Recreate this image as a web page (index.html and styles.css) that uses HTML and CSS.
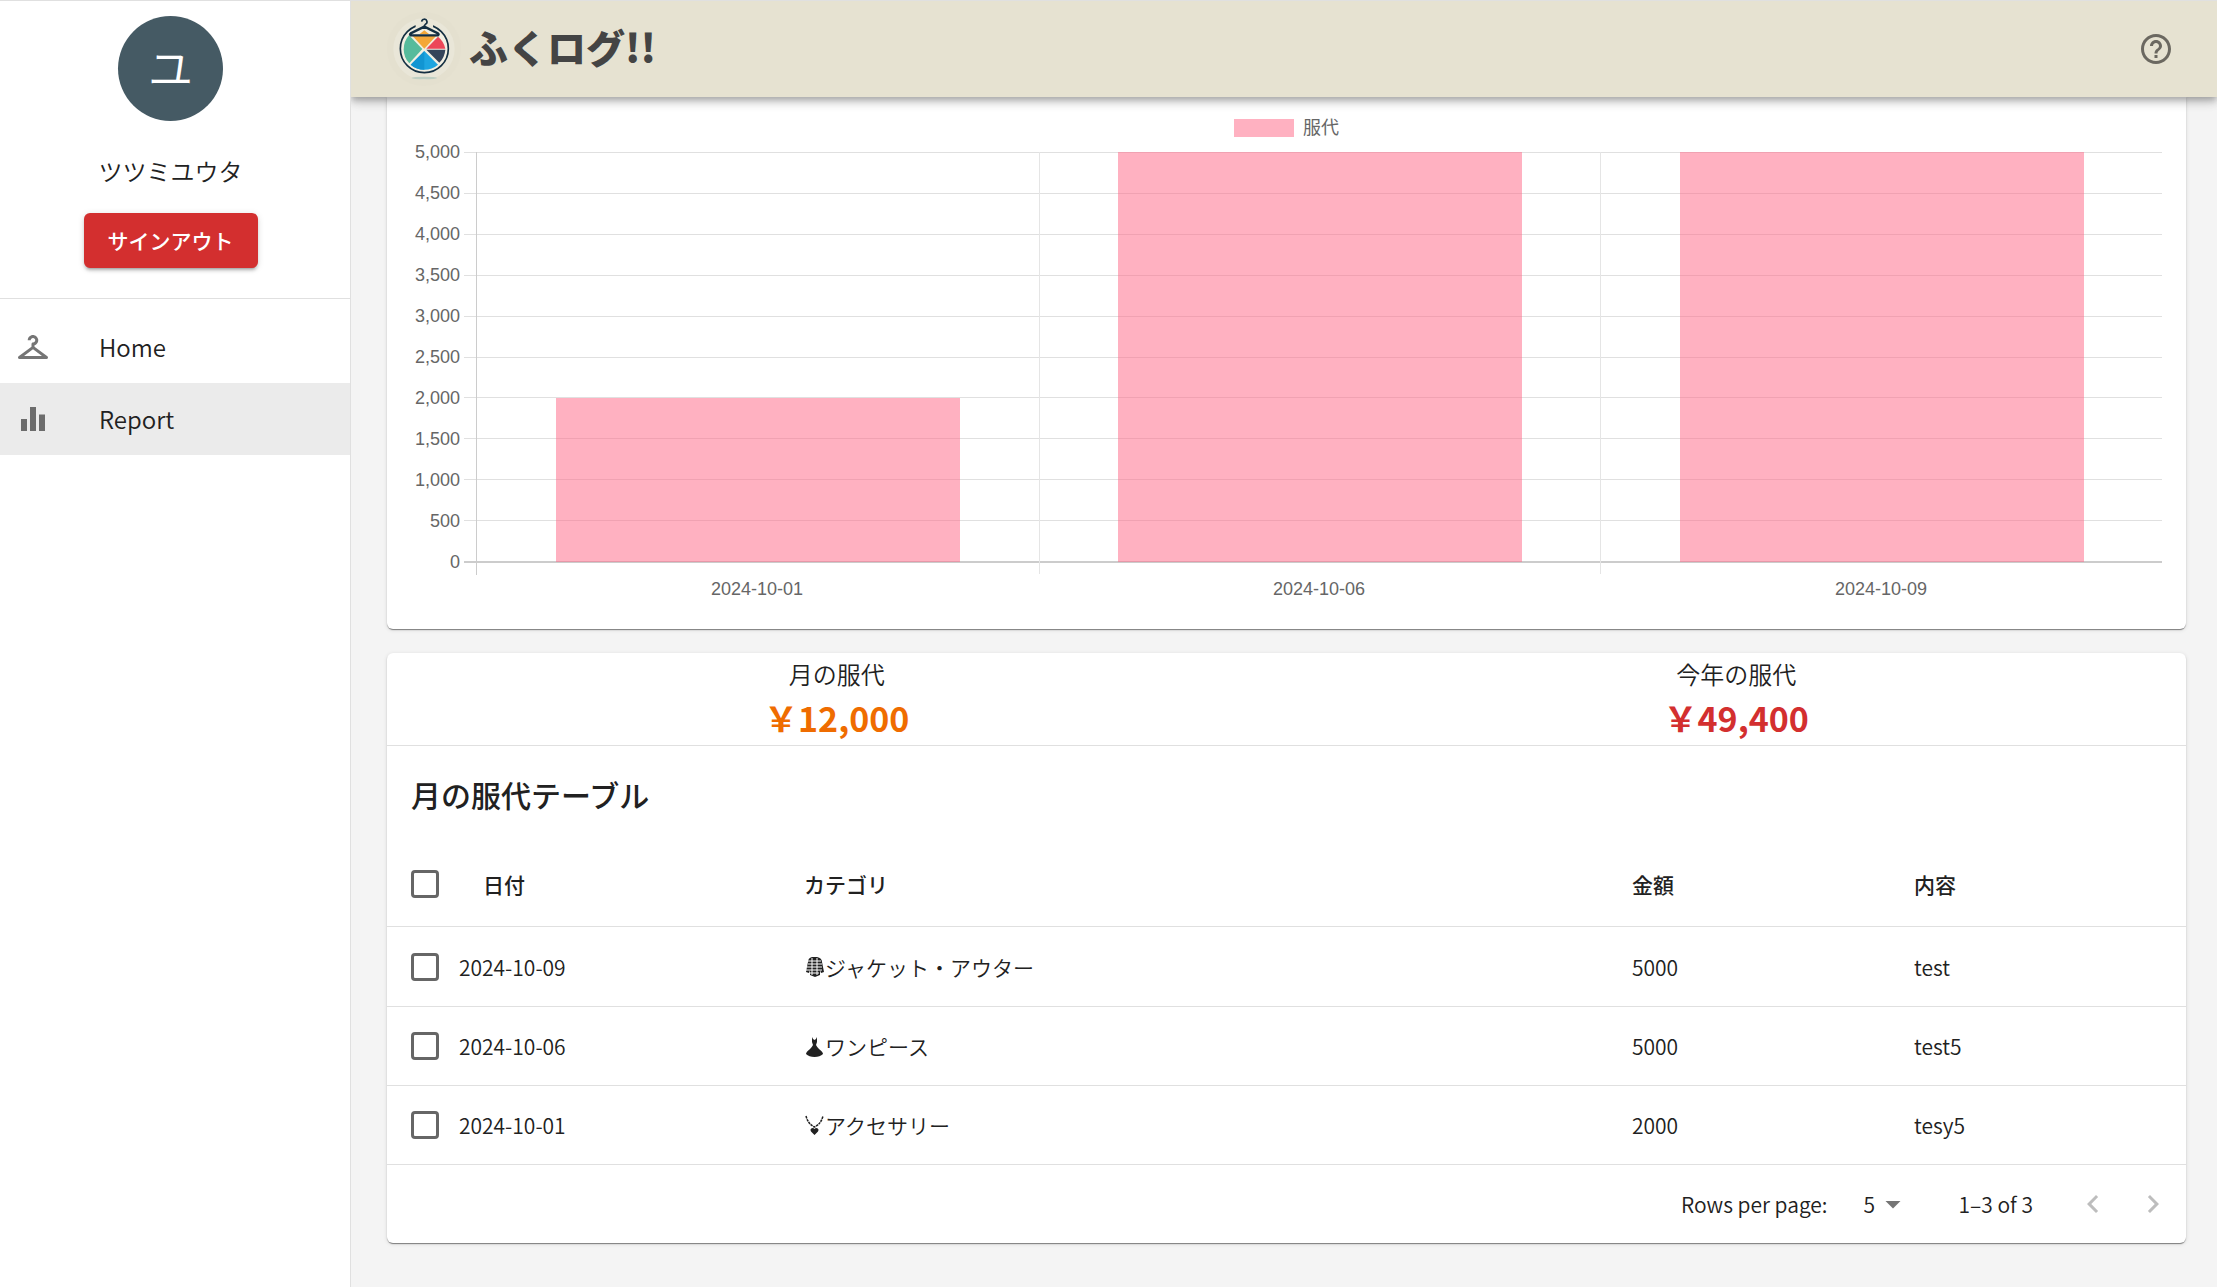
FILE: index.html
```html
<!DOCTYPE html>
<html lang="ja">
<head>
<meta charset="utf-8">
<title>ふくログ!!</title>
<link rel="stylesheet" href="styles.css">
</head>
<body>
<div class="app">
  <aside class="sidebar">
    <div class="profile">
      <div class="avatar">ユ</div>
      <p class="name">ツツミユウタ</p>
      <button class="signout" type="button">サインアウト</button>
    </div>
    <nav class="nav">
      <a class="nav-item" href="#home">
        <svg class="icon" viewBox="0 0 24 24"><path d="M21.6 18.2 13 11.75v-.91c1.65-.49 2.8-2.17 2.43-4.05-.26-1.31-1.3-2.4-2.61-2.7C10.54 3.57 8.5 5.3 8.5 7.5h2c0-.83.67-1.5 1.5-1.5s1.5.67 1.5 1.5c0 .84-.69 1.52-1.53 1.5-.54-.01-.97.45-.97.99v1.76L2.4 18.2c-.77.58-.36 1.8.6 1.8h18c.96 0 1.37-1.22.6-1.8M6 18l6-4.5 6 4.5z"/></svg>
        <span>Home</span>
      </a>
      <a class="nav-item selected" href="#report">
        <svg class="icon" viewBox="0 0 24 24"><path d="M10 20h4V4h-4zm-6 0h4v-8H4zM16 9v11h4V9z"/></svg>
        <span>Report</span>
      </a>
    </nav>
  </aside>

  <div class="page">
    <header class="header">
      <a class="brand" href="#home">
        <svg class="logo" viewBox="0 0 222 222">
          <circle cx="111" cy="111" r="111" fill="#e4e0cf"/>
          <circle cx="111" cy="111" r="92" fill="#e9e6d8"/>
          <ellipse cx="112" cy="198" rx="38" ry="4" fill="#bfcfc3"/>
          <circle cx="112" cy="110" r="72" fill="#f2efe2" stroke="#142f42" stroke-width="5"/>
          <path d="M112 110 74 69h76z" fill="#f4a738"/>
          <path d="M106 111 66 70A62 62 0 0 0 67 154z" fill="#56bb9c"/>
          <path d="M118 110 153 74A62 62 0 0 1 175 110z" fill="#ec4758"/>
          <path d="M118 113h57A62 62 0 0 1 157 152z" fill="#35445a"/>
          <path d="m112 117-41 41a62 62 0 0 0 82 0z" fill="#1ea5e0"/>
          <path d="m112 117-41 41a62 62 0 0 0 41 15z" fill="#1295d2"/>
          <path d="M86 33h52v22H86z" fill="#e9e6d8"/>
          <path d="M104 29a8 8 0 1 1 11 8q-3 2-3 8" fill="none" stroke="#142f42" stroke-width="5"/>
          <path d="M112 44 71 64q-4 3 0 6h82q4-3 0-6z" fill="#f2efe2" stroke="#142f42" stroke-width="7" stroke-linejoin="round"/>
          <path d="M112 55 98 66h28z" fill="#f4a738"/>
        </svg>
        <span class="brand-name">ふくログ!!</span>
      </a>
      <button class="help" type="button" aria-label="ヘルプ">
        <svg class="icon" viewBox="0 0 24 24"><path d="M11 18h2v-2h-2zm1-16C6.480 2 2 6.480 2 12s4.480 10 10 10 10-4.480 10-10S17.520 2 12 2m0 18c-4.410 0-8-3.590-8-8s3.590-8 8-8 8 3.590 8 8-3.590 8-8 8m0-14c-2.210 0-4 1.790-4 4h2c0-1.100.9-2 2-2s2 .9 2 2c0 2-3 1.750-3 5h2c0-2.250 3-2.500 3-5 0-2.210-1.790-4-4-4"/></svg>
      </button>
    </header>

    <main class="main">
      <section class="card chart">
        <div class="legend"><span class="swatch"></span>服代</div>
        <div class="chart-grid">
          <div class="y-axis">
            <span>5,000</span><span>4,500</span><span>4,000</span><span>3,500</span><span>3,000</span><span>2,500</span><span>2,000</span><span>1,500</span><span>1,000</span><span>500</span><span>0</span>
          </div>
          <div class="plot">
            <div class="rules"><i></i><i></i><i></i><i></i><i></i><i></i><i></i><i></i><i></i><i></i></div>
            <div class="bars">
              <div class="slot"><div class="bar" style="height:40%"></div></div>
              <div class="slot"><div class="bar" style="height:100%"></div></div>
              <div class="slot"><div class="bar" style="height:100%"></div></div>
            </div>
          </div>
          <div class="x-axis"><span>2024-10-01</span><span>2024-10-06</span><span>2024-10-09</span></div>
        </div>
      </section>

      <section class="card">
        <div class="summary">
          <div><p class="sum-label">月の服代</p><p class="sum-value month">￥12,000</p></div>
          <div><p class="sum-label">今年の服代</p><p class="sum-value year">￥49,400</p></div>
        </div>
        <h2 class="table-title">月の服代テーブル</h2>
        <table class="table">
          <colgroup><col class="c-check"><col class="c-date"><col class="c-cat"><col class="c-amount"><col></colgroup>
          <thead>
            <tr><th><input type="checkbox" aria-label="すべて選択"></th><th class="date">日付</th><th>カテゴリ</th><th>金額</th><th>内容</th></tr>
          </thead>
          <tbody>
            <tr>
              <td><input type="checkbox" aria-label="2024-10-09"></td><td class="date">2024-10-09</td>
              <td><span class="category"><svg class="cat-icon" viewBox="0 0 21 21"><path d="M8 1h5q5 1 5 5l2 10-3 1-1-3v5l-5 2-5-2v-5l-1 3-3-1L4 6q0-4 4-5z"/><path d="M8 2v17M13 2v17M4 5h13M4 8h14M3 11h15M2 14h16M6 17h9" stroke="#fff" stroke-width="1" fill="none"/></svg>ジャケット・アウター</span></td>
              <td>5000</td><td>test</td>
            </tr>
            <tr>
              <td><input type="checkbox" aria-label="2024-10-06"></td><td class="date">2024-10-06</td>
              <td><span class="category"><svg class="cat-icon" viewBox="0 0 21 21"><path d="M8 1l1 2 1.500 1L12 3l1-2v5l-1 3q1 2 3 4 4 3 4 5-3 3-8.500 3T2 18q0-2 4-5 2-2 3-4L8 6z"/></svg>ワンピース</span></td>
              <td>5000</td><td>test5</td>
            </tr>
            <tr>
              <td><input type="checkbox" aria-label="2024-10-01"></td><td class="date">2024-10-01</td>
              <td><span class="category"><svg class="cat-icon" viewBox="0 0 21 21"><path d="M2 1q2 8 8.500 11Q17 9 19 1" fill="none" stroke="currentColor" stroke-width="1.500" stroke-dasharray="2.500 .7"/><path d="M10.500 20 7 16.500q-1.500-3 1.500-3.500 1.500 0 2 1 .5-1 2-1 3 .5 1.500 3.500z"/></svg>アクセサリー</span></td>
              <td>2000</td><td>tesy5</td>
            </tr>
          </tbody>
        </table>
        <div class="pagination">
          <label for="rows">Rows per page:</label>
          <div class="select">
            <select id="rows"><option>5</option><option>10</option><option>25</option></select>
            <svg class="arrow" viewBox="0 0 24 24"><path d="m7 10 5 5 5-5z"/></svg>
          </div>
          <span class="range">1–3 of 3</span>
          <button class="pager" type="button" disabled aria-label="前のページ"><svg class="icon" viewBox="0 0 24 24"><path d="M15.410 16.590 10.830 12l4.580-4.590L14 6l-6 6 6 6z"/></svg></button>
          <button class="pager" type="button" disabled aria-label="次のページ"><svg class="icon" viewBox="0 0 24 24"><path d="M8.590 16.590 13.170 12 8.590 7.410 10 6l6 6-6 6z"/></svg></button>
        </div>
      </section>
    </main>
  </div>
</div>
</body>
</html>
```
FILE: styles.css
```css
* { box-sizing: border-box; }
body {
  margin: 0;
  background: #f4f4f4;
  color: #212121;
  font-family: "Noto Sans CJK JP", sans-serif;
  font-size: 21px;
  font-weight: 350;
  line-height: 30px;
}
p, h2 { margin: 0; }
button, select, input { font: inherit; color: inherit; margin: 0; }
button { border: 0; background: none; }
a { color: inherit; text-decoration: none; }
svg { display: block; fill: currentColor; flex: none; }
.icon { width: 36px; height: 36px; }

.app {
  display: grid;
  grid-template-columns: 351px 1fr;
  min-height: 100vh;
  border-top: 1px solid #e0e0e0;
}
.sidebar { background: #fff; border-right: 1px solid #e0e0e0; }
.profile {
  display: flex;
  flex-direction: column;
  align-items: center;
  padding: 15px 9px 30px 0;
  border-bottom: 1px solid #e0e0e0;
}
.avatar {
  width: 105px;
  height: 105px;
  border-radius: 50%;
  background: #455a64;
  color: #fff;
  font-size: 45px;
  line-height: 102px;
  text-align: center;
}
.name { margin: 32px 0 24px; font-size: 24px; line-height: 36px; }
.signout {
  padding: 0 24px;
  border-radius: 6px;
  background: #d32f2f;
  color: #fff;
  font-weight: 500;
  line-height: 55px;
  box-shadow: 0 4px 2px -3px rgba(0,0,0,.2), 0 3px 3px rgba(0,0,0,.14), 0 1px 7px rgba(0,0,0,.12);
}
.nav { padding-top: 12px; }
.nav-item {
  display: flex;
  align-items: center;
  gap: 48px;
  height: 72px;
  padding-left: 15px;
  font-size: 24px;
}
.nav-item .icon { color: #757575; }
.selected { background: #ebebeb; }
.selected .icon { color: #6c6c6c; }

.page { min-width: 0; }
.header {
  position: relative;
  z-index: 1;
  display: flex;
  align-items: center;
  justify-content: space-between;
  height: 96px;
  padding: 0 43px 0 36px;
  background: #e6e2d1;
  box-shadow: 0 3px 6px -1px rgba(0,0,0,.2), 0 6px 8px rgba(0,0,0,.14), 0 1px 15px rgba(0,0,0,.12);
  clip-path: inset(0 0 -30px 0);
}
.brand { display: flex; align-items: center; gap: 8px; }
.logo { width: 74px; height: 74px; }
.brand-name { padding-bottom: 6px; color: #444; font-size: 39px; font-weight: 900; line-height: 60px; }
.help { padding: 0; color: #6b6860; }

.main { display: grid; gap: 24px; padding: 0 31px 43px 36px; }
.card {
  border-radius: 6px;
  background: #fff;
  box-shadow: 0 3px 1px -2px rgba(0,0,0,.2), 0 1px 1px rgba(0,0,0,.3), 0 1px 4px rgba(0,0,0,.12);
}

.chart {
  padding: 16px 24px 30px;
  border-radius: 0 0 6px 6px;
  color: #666;
  font-family: "Liberation Sans", "Noto Sans CJK JP", sans-serif;
  font-size: 18px;
  font-weight: 400;
  line-height: 20px;
}
.legend {
  display: flex;
  align-items: center;
  justify-content: center;
  gap: 9px;
  height: 30px;
}
.swatch { width: 60px; height: 18px; background: #ffb1c1; }
.chart-grid {
  display: grid;
  grid-template-columns: 49px 1fr;
  column-gap: 16px;
  padding-top: 9px;
}
.y-axis {
  display: flex;
  flex-direction: column;
  justify-content: space-between;
  height: 430px;
  margin: -10px 0;
  text-align: right;
}
.plot { position: relative; height: 411px; }
.rules {
  display: grid;
  grid-template-rows: repeat(10, 1fr);
  height: 100%;
  margin-left: -12px;
  border-bottom: 2px solid #ccc;
}
.rules i { border-top: 1px solid #e0e0e0; }
.bars {
  position: absolute;
  inset: 0 0 -12px 0;
  display: grid;
  grid-template-columns: repeat(3, 1fr);
  border-left: 1px solid #ccc;
}
.slot {
  display: flex;
  align-items: flex-end;
  justify-content: center;
  height: 422px;
  padding-bottom: 12px;
}
.slot + .slot { border-left: 1px solid #e5e5e5; }
.bar { width: 72%; background: rgba(255,99,132,.5); }
.x-axis {
  grid-column: 2;
  display: grid;
  grid-template-columns: repeat(3, 1fr);
  padding-top: 16px;
  text-align: center;
}

.summary {
  display: grid;
  grid-template-columns: 1fr 1fr;
  padding: 3px 0 1px;
  border-bottom: 1px solid #e0e0e0;
  text-align: center;
}
.sum-label { font-size: 24px; line-height: 36px; }
.sum-value { font-size: 34px; font-weight: 700; line-height: 52px; }
.month { color: #ef6c00; }
.year { color: #d32f2f; }
.table-title {
  padding: 0 24px;
  font-size: 30px;
  font-weight: 500;
  line-height: 96px;
}
.table { width: 100%; table-layout: fixed; border-collapse: separate; border-spacing: 0; }
.c-check { width: 72px; }
.c-date { width: 17.84%; }
.c-cat { width: 46.03%; }
.c-amount { width: 15.68%; }
th, td {
  height: 79px;
  padding: 0 24px;
  border-bottom: 1px solid #e0e0e0;
  font-weight: inherit;
  text-align: left;
}
th { height: 85px; font-weight: 500; }
tbody tr:first-child td { height: 80px; }
td.date { padding-left: 0; }
th.date { padding-left: 24px; }
input[type="checkbox"] {
  appearance: none;
  display: block;
  width: 28px;
  height: 28px;
  border: 3px solid #666;
  border-radius: 4px;
}
.category { display: flex; align-items: center; }
.cat-icon { width: 21px; height: 21px; }

.pagination {
  display: flex;
  align-items: center;
  justify-content: flex-end;
  height: 78px;
  padding-right: 3px;
}
.select { display: flex; align-items: center; margin: 0 48px 0 36px; }
.select select { appearance: none; width: 47px; padding: 0; border: 0; background: transparent; }
.arrow { width: 36px; height: 36px; margin-left: -36px; color: #757575; pointer-events: none; }
.range { margin-right: 30px; }
.pager { padding: 12px; color: #bdbdbd; }
```
